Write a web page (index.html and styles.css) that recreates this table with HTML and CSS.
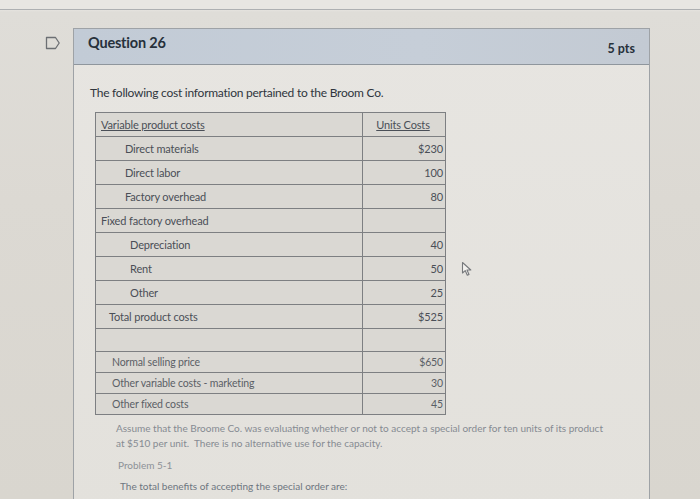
FILE: index.html
```html
<!DOCTYPE html>
<html>
<head>
<meta charset="utf-8">
<link rel="stylesheet" href="styles.css">
</head>
<body>
<div class="page">
  <div class="topline"></div>
  <div class="question">
    <div class="gutter">
      <svg class="flag" width="16" height="14" viewBox="0 0 16 14"><path d="M1.5 1.5 H10.5 L14.2 7 L10.5 12.5 H1.5 Z" fill="none" stroke="#6c6f73" stroke-width="1.3" stroke-linejoin="round"/></svg>
    </div>
    <div class="panel">
      <div class="header">
        <span class="title">Question 26</span>
        <span class="pts">5 pts</span>
      </div>
      <div class="body">
        <p class="intro">The following cost information pertained to the Broom Co.</p>
        <table class="costs">
          <tr><td class="lbl top"><u>Variable product costs</u></td><td class="val center"><u>Units Costs</u></td></tr>
          <tr><td class="lbl sub">Direct materials</td><td class="val">$230</td></tr>
          <tr><td class="lbl sub">Direct labor</td><td class="val">100</td></tr>
          <tr><td class="lbl sub">Factory overhead</td><td class="val">80</td></tr>
          <tr><td class="lbl top">Fixed factory overhead</td><td class="val"></td></tr>
          <tr><td class="lbl sub2">Depreciation</td><td class="val">40</td></tr>
          <tr><td class="lbl sub2">Rent</td><td class="val">50</td></tr>
          <tr><td class="lbl sub2">Other</td><td class="val">25</td></tr>
          <tr><td class="lbl top2">Total product costs</td><td class="val">$525</td></tr>
          <tr class="empty"><td class="lbl top2"></td><td class="val"></td></tr>
          <tr class="small"><td class="lbl top3">Normal selling price</td><td class="val">$650</td></tr>
          <tr class="small"><td class="lbl top3">Other variable costs - marketing</td><td class="val">30</td></tr>
          <tr class="small"><td class="lbl top3">Other fixed costs</td><td class="val">45</td></tr>
        </table>
        <p class="assume">Assume that the Broome Co. was evaluating whether or not to accept a special order for ten units of its product at $510 per unit.&nbsp; There is no alternative use for the capacity.</p>
        <p class="problem">Problem 5-1</p>
        <p class="benefits">The total benefits of accepting the special order are:</p>
      </div>
    </div>
  </div>
  <svg class="cursor" width="12" height="16" viewBox="0 0 12 16"><path d="M1.5 1.5 L1.5 12 L4.2 9.6 L6.3 14.2 L8 13.4 L6 9 L9.8 9 Z" fill="#f2f1ee" stroke="#77797c" stroke-width="1.1" stroke-linejoin="round"/></svg>
</div>
</body>
</html>
```

FILE: styles.css
```css
html, body {
  margin: 0;
  padding: 0;
}
body {
  width: 700px;
  height: 499px;
  overflow: hidden;
  font-family: Lato, "Open Sans", sans-serif;
}
.page {
  position: relative;
  width: 700px;
  height: 499px;
  background: linear-gradient(180deg, #e8e6e2 0px, #e8e6e2 9px, #dfddd8 12px, #dcd9d3 200px, #d9d6cf 499px);
}
.topline {
  height: 9px;
  border-bottom: 1px solid #aeb0b2;
}
.question {
  display: flex;
  margin-top: 18px;
}
.gutter {
  width: 73px;
  flex: none;
}
.flag {
  display: block;
  margin: 8px 0 0 45px;
}
.panel {
  width: 575px;
  height: 480px;
  border: 1px solid #9ea2a6;
  border-bottom: none;
  background: linear-gradient(180deg, #e7e5e1, #e3e1dc);
}
.header {
  height: 35px;
  background: linear-gradient(90deg, #c2cbd6, #c6ced8 60%, #c3cad3);
  border-bottom: 1px solid #8f969d;
  display: flex;
  justify-content: space-between;
  padding: 0 14px;
  color: #27313b;
}
.title {
  font-size: 14.5px;
  font-weight: 700;
  padding-top: 5px;
  letter-spacing: -0.2px;
}
.pts {
  font-size: 12.5px;
  font-weight: 700;
  padding-top: 12px;
}
.body {
  padding: 20px 0 0 16px;
}
.intro {
  margin: 0;
  font-size: 12px;
  line-height: 16px;
  color: #2f353d;
  letter-spacing: -0.25px;
}
.costs {
  margin: 11px 0 0 5px;
  border-collapse: collapse;
  width: 351px;
  font-size: 11px;
  color: #4a4f57;
}
.costs td {
  height: 23px;
  padding: 0;
  border: 1px solid #7d7f82;
  background: #dad8d3;
  white-space: nowrap;
  letter-spacing: -0.15px;
}
.costs .top { padding-left: 5px; }
.costs .sub { padding-left: 29px; }
.costs .sub2 { padding-left: 34px; }
.costs .top2 { padding-left: 13px; }
.costs .top3 { padding-left: 16px; }
.costs .val {
  width: 80px;
  text-align: right;
  padding-right: 2px;
}
.costs .center {
  text-align: center;
}
.costs tr.empty td {
  height: 22px;
}
.costs tr.small td {
  height: 20px;
  font-size: 10.5px;
  color: #5a5f66;
}
.assume {
  margin: 6px 0 0 26px;
  width: 488px;
  font-size: 10px;
  line-height: 15px;
  color: #868b92;
  letter-spacing: 0;
}
.problem {
  margin: 8px 0 0 28px;
  font-size: 10px;
  color: #8d9197;
}
.benefits {
  margin: 9px 0 0 30px;
  font-size: 10px;
  color: #6e7680;
}
.cursor {
  position: absolute;
  left: 461px;
  top: 261px;
}
```
